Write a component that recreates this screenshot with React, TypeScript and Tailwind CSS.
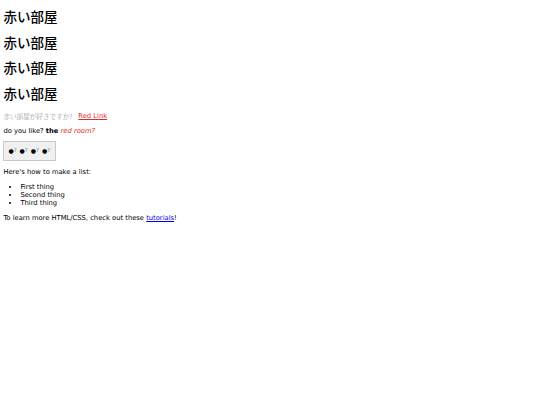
import React from "react";

function Dot() {
  return (
    <span className="inline-flex items-start">
      <span className="text-[6px] leading-[8px] text-black">●</span>
      <span className="text-[5.5px] leading-[6px] text-[#777]">?</span>
    </span>
  );
}

export default function App() {
  return (
    <div className="min-h-[405px] w-[540px] bg-white px-[3.4px] pt-[8px] text-black font-['DejaVu_Sans',sans-serif] text-[6.75px] leading-[8px]">
      {[0, 1, 2, 3].map((i) => (
        <h1
          key={i}
          className="mb-[9px] text-[13.5px] leading-[16.7px] font-medium font-['Noto_Sans_CJK_JP',sans-serif]"
        >
          赤い部屋
        </h1>
      ))}
      <p className="mb-[6.5px] flex h-[9.5px] items-center">
        <span className="text-[6.6px] text-[#888] font-light font-['Noto_Sans_CJK_JP',sans-serif]">
          赤い部屋が好きですか?
        </span>
        <a className="ml-[6px] text-[#e02828] underline" href="#">
          Red Link
        </a>
      </p>
      <p className="mb-[6.5px]">
        do you like? <b className="font-bold">the</b>{" "}
        <i className="italic text-[#e02828]">red room?</i>
      </p>
      <button className="mb-[6.75px] flex h-[20px] w-[53px] items-center justify-start gap-[3px] pl-[4px] border border-[#c8c8c8] bg-[#f0f0f0]">
        <Dot />
        <Dot />
        <Dot />
        <Dot />
      </button>
      <p className="mb-[7px]">Here's how to make a list:</p>
      <ul className="mb-[7px] list-disc pl-[17px]">
        <li>First thing</li>
        <li>Second thing</li>
        <li>Third thing</li>
      </ul>
      <p>
        To learn more HTML/CSS, check out these{" "}
        <a className="text-[#0000ee] underline" href="#">
          tutorials
        </a>
        !
      </p>
    </div>
  );
}
